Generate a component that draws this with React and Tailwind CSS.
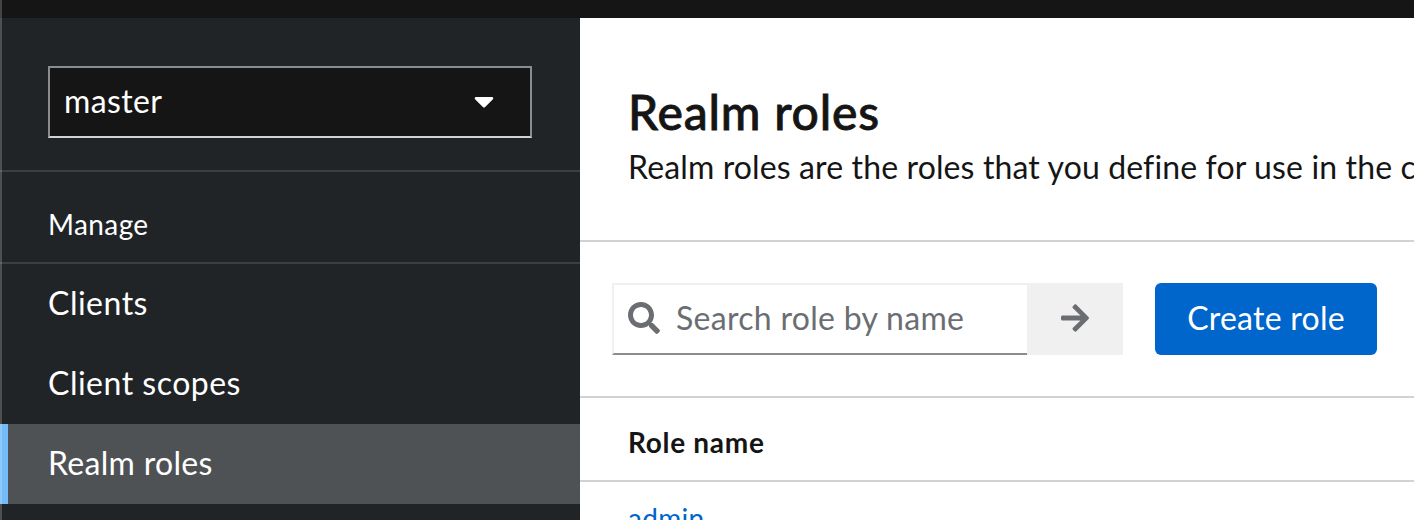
import { FaArrowRight, FaCaretDown, FaSearch } from "react-icons/fa";

function NavItem({ label, spacing, active }) {
  return (
    <a
      className={
        active
          ? "flex h-20 items-center border-l-8 border-[#73bcf7] bg-[#4f5255] pb-0.5 pl-10"
          : "flex h-20 items-center pb-0.5 pl-12"
      }
    >
      <span className={spacing}>{label}</span>
    </a>
  );
}

function Sidebar() {
  return (
    <aside className="w-[580px] shrink-0 bg-[#212427] text-[32px] leading-[48px] text-white">
      <div className="border-b-2 border-[#3c3f42] px-12 pt-12 pb-8">
        <button className="flex h-[72px] w-[484px] items-center justify-between border-2 border-[#8a8d90] border-b-[#d2d2d2] bg-[#151515] pr-9 pb-0.5 pl-3.5">
          <span className="tracking-[0.4px]">master</span>
          <FaCaretDown className="h-8 w-5" />
        </button>
      </div>
      <h2 className="flex h-[92px] items-center border-b-2 border-[#3c3f42] pt-3.5 pl-12 text-[28px]">
        <span className="tracking-[0.4px]">Manage</span>
      </h2>
      <nav>
        <NavItem label="Clients" spacing="tracking-[0.5px]" />
        <NavItem label="Client scopes" spacing="tracking-[0.5px]" />
        <NavItem label="Realm roles" spacing="tracking-[0.3px]" active />
      </nav>
    </aside>
  );
}

function Toolbar() {
  return (
    <div className="flex h-[156px] items-center border-b-2 border-[#d2d2d2] pl-8">
      <label className="flex h-[72px] w-[415px] items-center border-t-2 border-b-2 border-l-2 border-[#f0f0f0] border-b-[#8a8d90] pb-0.5 pl-3.5 text-[#6a6e73]">
        <FaSearch className="size-8 shrink-0" />
        <span className="ml-4 text-[32px] tracking-[0.3px] whitespace-nowrap">Search role by name</span>
      </label>
      <button className="flex h-[72px] w-24 items-center justify-center bg-[#f0f0f0] pb-0.5 text-[#6a6e73]">
        <FaArrowRight className="h-8 w-7" />
      </button>
      <button className="ml-8 flex h-[72px] w-[222px] items-center justify-center rounded-md bg-[#0066cc] pb-0.5 text-[32px] text-white">
        <span className="tracking-[0.25px]">Create role</span>
      </button>
    </div>
  );
}

export default function App() {
  return (
    <div className="relative flex h-[520px] w-[1414px] flex-col overflow-hidden bg-white font-['Lato',sans-serif] text-[#151515]">
      <header className="h-[18px] shrink-0 bg-[#151515]" />
      <div className="flex min-h-0 flex-1">
        <Sidebar />
        <main className="min-w-0 flex-1 overflow-hidden">
          <section className="h-56 border-b-2 border-[#d2d2d2] pt-[63px] pl-12 whitespace-nowrap">
            <h1 className="text-[48px] leading-[62px] font-medium tracking-[0.8px] [-webkit-text-stroke:0.8px_#151515]">
              Realm roles
            </h1>
            <p className="text-[32px] leading-[48px] tracking-[0.13px]">
              Realm roles are the roles that you define for use in the current realm.
            </p>
          </section>
          <Toolbar />
          <div className="flex h-[84px] items-center border-b-2 border-[#d2d2d2] pt-1.5 pl-12 text-[28px] font-bold">
            <span className="tracking-[0.7px]">Role name</span>
          </div>
          <div className="pt-[15px] pl-12 text-[28px] leading-[42px] text-[#0066cc]">
            <a className="tracking-[0.3px]">admin</a>
          </div>
        </main>
      </div>
      <div className="absolute top-0 left-0 h-full w-0.5 bg-white/20" />
    </div>
  );
}
